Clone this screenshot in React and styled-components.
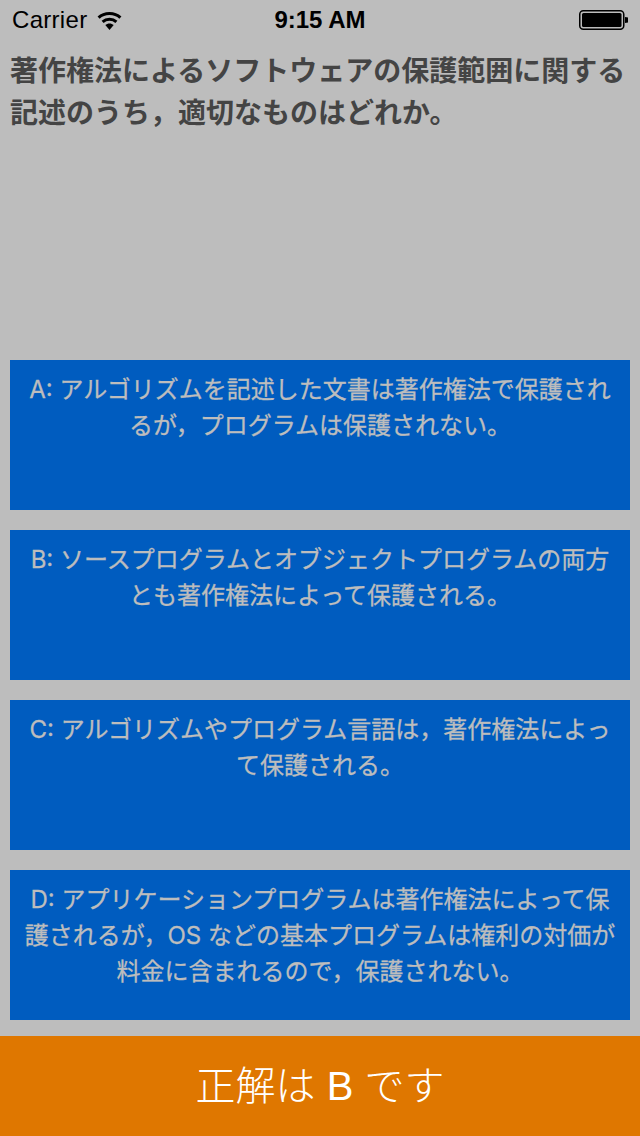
import React from 'react';
import styled, { createGlobalStyle } from 'styled-components';

const GlobalStyle = createGlobalStyle`
    html, body {
        margin: 0;
        padding: 0;
        background: #bdbdbd;
    }
`

const Screen = styled.div`
    display: flex;
    flex-direction: column;
    width: 640px;
    height: 1136px;
    overflow: hidden;
    background: #bdbdbd;
    font-family: "Liberation Sans", "Noto Sans CJK JP", sans-serif;
`

const StatusBar = styled.div`
    display: grid;
    grid-template-columns: 1fr auto 1fr;
    align-items: center;
    height: 40px;
    padding: 0 12px;
    box-sizing: border-box;
    color: #000;
    font-size: 24px;
`

const Carrier = styled.div`
    display: flex;
    align-items: center;
    gap: 10px;
    letter-spacing: 0.3px;
`

const Clock = styled.div`
    font-weight: 700;
`

const Battery = styled.svg`
    justify-self: end;
    margin-right: -1px;
`

const Question = styled.p`
    height: 320px;
    margin: 0;
    padding: 11px 10px 0;
    box-sizing: border-box;
    color: #444;
    font-size: 28px;
    font-weight: 700;
    line-height: 42px;
`

const Choices = styled.div`
    display: flex;
    flex-direction: column;
    gap: 20px;
    padding: 0 10px;
`

const Choice = styled.div`
    height: 150px;
    padding: 12px 10px 0;
    box-sizing: border-box;
    background: #005cbf;
    color: #bdbdbd;
    font-family: Inter, "Noto Sans CJK JP", sans-serif;
    font-size: 24px;
    font-weight: 400;
    line-height: 36px;
    text-align: center;
    -webkit-text-stroke: 0.3px #bdbdbd;
`

const Answer = styled.div`
    display: flex;
    align-items: center;
    justify-content: center;
    height: 100px;
    margin-top: 16px;
    padding-bottom: 6px;
    box-sizing: border-box;
    background: #df7700;
    color: #fff;
    font-size: 40px;
    font-weight: 300;
`

const choices = [
    'A: アルゴリズムを記述した文書は著作権法で保護されるが，プログラムは保護されない。',
    'B: ソースプログラムとオブジェクトプログラムの両方とも著作権法によって保護される。',
    'C: アルゴリズムやプログラム言語は，著作権法によって保護される。',
    'D: アプリケーションプログラムは著作権法によって保護されるが，OS などの基本プログラムは権利の対価が料金に含まれるので，保護されない。',
]

const App = () => {
    return (
        <Screen lang="ja">
            <GlobalStyle />
            <StatusBar>
                <Carrier>
                    Carrier
                    <svg width="25" height="19" viewBox="0 0 25 19">
                        <path d="M12.5 19 L8.3 14 C10.6 11.9 14.4 11.9 16.7 14 Z" fill="#000" />
                        <path d="M5.6 10.8 C9.4 7.3 15.6 7.3 19.4 10.8" fill="none" stroke="#000" strokeWidth="3" />
                        <path d="M1.6 6.6 C7.4 1 17.6 1 23.4 6.6" fill="none" stroke="#000" strokeWidth="3" />
                    </svg>
                </Carrier>
                <Clock>9:15 AM</Clock>
                <Battery width="50" height="20" viewBox="0 0 50 20">
                    <rect x="0.75" y="0.75" width="44" height="18.5" rx="3.5" fill="none" stroke="#000" strokeWidth="1.5" />
                    <rect x="3" y="3" width="39.5" height="14" rx="1.5" fill="#000" />
                    <path d="M46 7 L49 7.5 L49 12.5 L46 13 Z" fill="#000" />
                </Battery>
            </StatusBar>
            <Question>著作権法によるソフトウェアの保護範囲に関する記述のうち，適切なものはどれか。</Question>
            <Choices>
                {choices.map(text => <Choice key={text}>{text}</Choice>)}
            </Choices>
            <Answer>正解は B です</Answer>
        </Screen>
    );
}

export default App;
